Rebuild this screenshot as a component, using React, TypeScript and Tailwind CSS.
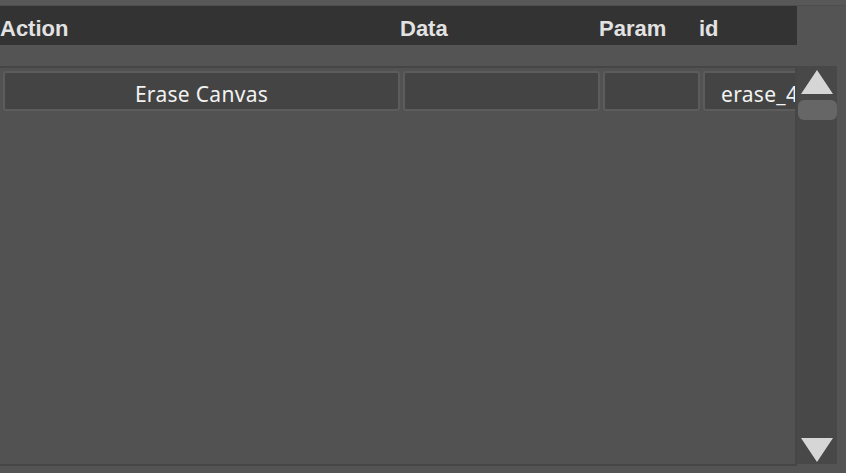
import React from "react";

const headFont = { fontFamily: '"Liberation Sans", Arial, sans-serif' };
const cellFont = { fontFamily: '"Noto Sans", "Open Sans", sans-serif' };

export default function App() {
  return (
    <div className="w-[846px] h-[473px] bg-[#545454] overflow-hidden flex flex-col" style={{ fontFamily: '"Liberation Sans", Arial, sans-serif' }}>
      <div className="h-[6px] bg-[#585858] border-b border-[#4e4e4e]" />
      <div className="h-[39px] w-[797px] bg-[#333333] flex items-center pt-[7px] text-[22px] leading-none font-bold text-[#e2e2e2]" style={headFont}>
        <div className="w-[400px]">Action</div>
        <div className="w-[199px]">Data</div>
        <div className="w-[100px]">Param</div>
        <div className="flex-1">id</div>
      </div>
      <div className="h-[21px]" />
      <div className="flex h-[398px]">
        <div className="w-[797px] bg-[#525252] border-t-2 border-r-2 border-[#464646] overflow-hidden">
          <div className="flex gap-[3px] pt-[3px] pl-[3px] w-[820px] text-[21px] tracking-[0.3px] text-[#f2f2f2]" style={cellFont}>
            <div className="w-[397px] h-[40px] bg-[#444444] border-2 border-[#5c5c5c] rounded-[3px] flex items-center justify-center pt-[7px] leading-none">
              Erase Canvas
            </div>
            <div className="w-[197px] h-[40px] bg-[#444444] border-2 border-[#5c5c5c] rounded-[3px]" />
            <div className="w-[97px] h-[40px] bg-[#444444] border-2 border-[#5c5c5c] rounded-[3px]" />
            <div className="w-[100px] h-[40px] bg-[#444444] border-2 border-[#5c5c5c] rounded-[3px] flex items-center pl-[16px] pt-[7px] leading-none whitespace-nowrap overflow-hidden">
              erase_4
            </div>
          </div>
        </div>
        <div className="w-[40px] bg-[#484848] flex flex-col items-center">
          <svg width="34" height="26" viewBox="0 0 34 26" className="mt-[3px]">
            <polygon points="17,1 33,25 1,25" fill="#d6d6d6" />
          </svg>
          <div className="mt-[5px] w-[39px] h-[20px] bg-[#666666] rounded-[6px]" />
          <div className="flex-1" />
          <svg width="34" height="26" viewBox="0 0 34 26" className="mb-[1px]">
            <polygon points="1,1 33,1 17,25" fill="#d6d6d6" />
          </svg>
        </div>
      </div>
      <div className="flex-1 border-t-2 border-[#464646] w-[797px]" />
    </div>
  );
}
